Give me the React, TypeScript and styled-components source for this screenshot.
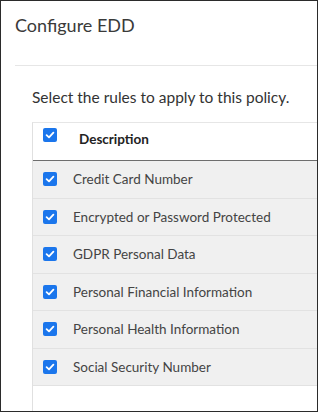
import React from 'react';
import styled, { createGlobalStyle } from 'styled-components';

const GlobalStyle = createGlobalStyle`
  body {
    margin: 0;
    font-family: Lato, "Open Sans", sans-serif;
    background: #ffffff;
  }
`;

const rules = [
  'Credit Card Number',
  'Encrypted or Password Protected',
  'GDPR Personal Data',
  'Personal Financial Information',
  'Personal Health Information',
  'Social Security Number',
];

const Checkbox: React.FC = () => (
  <Box>
    <svg width="10" height="10" viewBox="0 0 10 10">
      <path d="M1.6 5.2 L4 7.4 L8.4 2.6" fill="none" stroke="#fff" strokeWidth="1.8" strokeLinecap="round" strokeLinejoin="round" />
    </svg>
  </Box>
);

const App: React.FC = () => {
  return (
    <>
      <GlobalStyle />
      <Frame>
        <Title>Configure EDD</Title>
        <Divider />
        <Content>
          <Intro>Select the rules to apply to this policy.</Intro>
          <Table>
            <HeaderRow>
              <CheckCell $top><Checkbox /></CheckCell>
              <HeaderLabel>Description</HeaderLabel>
            </HeaderRow>
            {rules.map(rule => (
              <Row key={rule}>
                <CheckCell><Checkbox /></CheckCell>
                <RowLabel>{rule}</RowLabel>
              </Row>
            ))}
          </Table>
        </Content>
      </Frame>
    </>
  );
};

const Frame = styled.div`
  width: 318px;
  height: 412px;
  box-sizing: border-box;
  border: 1px solid #2b2b2b;
  overflow: hidden;
  display: flex;
  flex-direction: column;
`;

const Title = styled.div`
  padding: 13px 0 0 14px;
  height: 64px;
  box-sizing: border-box;
  font-size: 18px;
  color: #3a3a3a;
`;

const Divider = styled.div`
  margin-left: 14px;
  height: 1px;
  background: #e6e6e6;
`;

const Content = styled.div`
  flex: 1;
  padding-left: 31px;
  display: flex;
  flex-direction: column;
`;

const Intro = styled.div`
  padding-top: 22px;
  height: 56px;
  box-sizing: border-box;
  font-size: 15.5px;
  color: #333;
`;

const Table = styled.div`
  flex: 1;
  width: 320px;
  border-left: 1px solid #e0e0e0;
  border-top: 1px solid #e6e6e6;
`;

const HeaderRow = styled.div`
  height: 37px;
  display: flex;
  align-items: center;
  border-bottom: 1px solid #6e6e6e;
  background: #fff;
`;

const Row = styled.div`
  height: 36.5px;
  display: flex;
  align-items: center;
  background: #f0f0f0;
  border-bottom: 1px solid #e2e2e2;
`;

const CheckCell = styled.div<{ $top?: boolean }>`
  width: 40px;
  padding-left: 10px;
  box-sizing: border-box;
  display: flex;
  align-items: center;
  align-self: ${props => props.$top ? 'flex-start' : 'center'};
  padding-top: ${props => props.$top ? '5px' : '0'};
`;

const Box = styled.span`
  width: 14px;
  height: 14px;
  border-radius: 2px;
  background: #1b76ec;
  display: flex;
  align-items: center;
  justify-content: center;
`;

const HeaderLabel = styled.span`
  font-size: 13.5px;
  font-weight: 700;
  color: #222;
  margin-left: 6px;
  margin-bottom: 5px;
`;

const RowLabel = styled.span`
  font-size: 13.5px;
  color: #444;
`;

export default App;
